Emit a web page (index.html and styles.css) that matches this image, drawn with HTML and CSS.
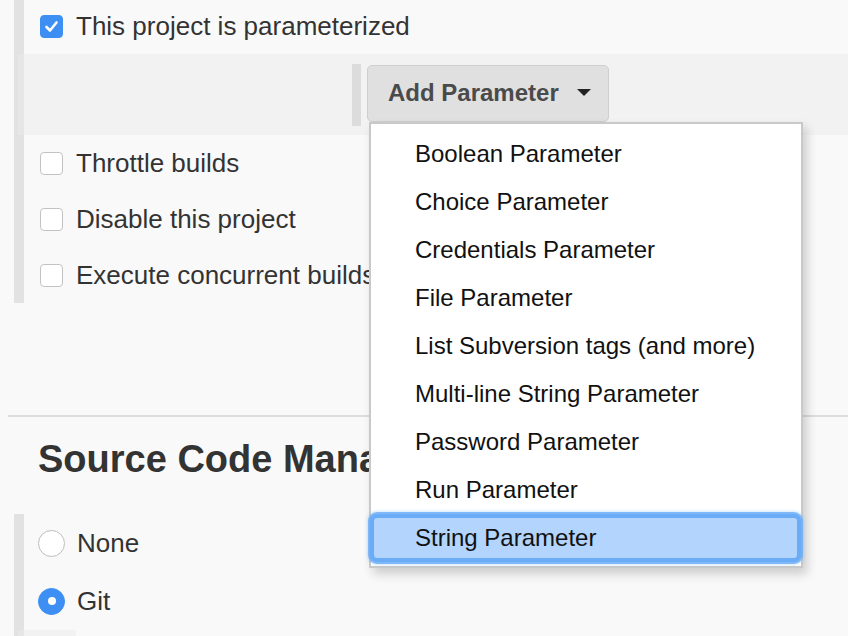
FILE: index.html
```html
<!DOCTYPE html>
<html>
<head>
<meta charset="utf-8">
<link rel="stylesheet" href="styles.css">
</head>
<body>
<div class="page">
  <div class="sec1">
    <div class="row row-first">
      <span class="cb checked">
        <svg viewBox="0 0 23 23" width="23" height="23"><path d="M6.5 12 L10 15.5 L16.5 7.5" fill="none" stroke="#fff" stroke-width="2.6" stroke-linecap="round" stroke-linejoin="round"/></svg>
      </span>
      <span class="label">This project is parameterized</span>
    </div>
    <div class="band">
      <span class="band-bar"></span>
      <button class="add-btn">Add Parameter<span class="caret"></span></button>
    </div>
    <div class="row"><span class="cb"></span><span class="label">Throttle builds</span></div>
    <div class="row"><span class="cb"></span><span class="label">Disable this project</span></div>
    <div class="row"><span class="cb"></span><span class="label">Execute concurrent builds if necessary</span></div>
  </div>

  <div class="sec2">
    <h2 class="heading">Source Code Management</h2>
  </div>

  <div class="sec3">
    <div class="rrow"><span class="radio"></span><span class="label">None</span></div>
    <div class="rrow"><span class="radio on"></span><span class="label">Git</span></div>
    <div class="band2"></div>
  </div>

  <ul class="menu">
    <li class="item">Boolean Parameter</li>
    <li class="item">Choice Parameter</li>
    <li class="item">Credentials Parameter</li>
    <li class="item">File Parameter</li>
    <li class="item">List Subversion tags (and more)</li>
    <li class="item">Multi-line String Parameter</li>
    <li class="item">Password Parameter</li>
    <li class="item">Run Parameter</li>
    <li class="item selected">String Parameter</li>
  </ul>
</div>
</body>
</html>
```

FILE: styles.css
```css
html, body {
  margin: 0;
  padding: 0;
}
body {
  font-family: "Liberation Sans", Arial, Helvetica, sans-serif;
  background: #f9f9f9;
}
.page {
  position: relative;
  width: 848px;
  height: 636px;
  overflow: hidden;
  background: #f9f9f9;
  color: #333;
}
.sec1 {
  margin-left: 14px;
  border-left: 10px solid #e2e2e2;
}
.row {
  display: flex;
  align-items: center;
  height: 56px;
  padding-left: 16px;
  gap: 13px;
  white-space: nowrap;
}
.row-first {
  height: 52px;
  margin-bottom: 2px;
}
.label {
  font-size: 26px;
  color: #333;
}
.cb {
  box-sizing: border-box;
  width: 23px;
  height: 23px;
  flex: none;
  border: 1px solid #c3c3c3;
  border-radius: 4px;
  background: #fff;
  display: flex;
}
.cb.checked {
  background: #3d8ff3;
  border-color: #3d8ff3;
}
.cb.checked svg {
  margin: -1px;
}
.band {
  display: flex;
  align-items: center;
  height: 81px;
  margin-left: -6px;
  border-left: 6px solid #e6e6e6;
  background: #f2f2f2;
}
.band-bar {
  width: 9px;
  height: 62px;
  margin-left: 328px;
  margin-right: 6px;
  background: #dcdcdc;
  align-self: flex-start;
  margin-top: 10px;
}
.add-btn {
  box-sizing: border-box;
  width: 242px;
  height: 57px;
  align-self: flex-start;
  margin-top: 11px;
  border: 1px solid #cfcfcf;
  border-radius: 5px;
  background: #e0e0e0;
  font-family: "Liberation Sans", Arial, sans-serif;
  font-weight: bold;
  font-size: 24px;
  color: #4a4a4a;
  text-align: left;
  padding: 0 0 2px 20px;
  display: flex;
  align-items: center;
}
.caret {
  width: 0;
  height: 0;
  margin-left: 18px;
  border-left: 7.5px solid transparent;
  border-right: 7.5px solid transparent;
  border-top: 7px solid #222;
}
.sec2 {
  margin-left: 8px;
  margin-top: 112px;
  border-top: 2px solid #dddddd;
  padding-left: 30px;
}
.heading {
  margin: 0;
  padding-top: 18px;
  height: 79px;
  box-sizing: border-box;
  font-size: 38px;
  font-weight: bold;
  line-height: 48px;
  color: #333;
  white-space: nowrap;
}
.sec3 {
  margin-left: 14px;
  margin-top: 18px;
  border-left: 10px solid #e2e2e2;
}
.rrow {
  display: flex;
  align-items: center;
  height: 58px;
  padding-left: 14px;
  gap: 12px;
}
.radio {
  box-sizing: border-box;
  width: 27px;
  height: 27px;
  flex: none;
  border-radius: 50%;
  border: 1px solid #bdbdbd;
  background: #fff;
  display: flex;
  align-items: center;
  justify-content: center;
}
.radio.on {
  background: #3d8ff3;
  border-color: #3d8ff3;
}
.radio.on::after {
  content: "";
  width: 8px;
  height: 8px;
  border-radius: 50%;
  background: #fff;
}
.band2 {
  margin-left: -6px;
  width: 52px;
  height: 20px;
  border-left: 6px solid #e6e6e6;
  background: #f2f2f2;
}
.menu {
  position: absolute;
  left: 369px;
  top: 122px;
  box-sizing: border-box;
  width: 434px;
  height: 446px;
  margin: 0;
  padding: 6px 0 0 0;
  list-style: none;
  background: #fff;
  border: 2px solid #c9c9c9;
  box-shadow: 4px 6px 10px rgba(0, 0, 0, 0.18);
}
.item {
  box-sizing: border-box;
  height: 48px;
  display: flex;
  align-items: center;
  padding-left: 44px;
  font-size: 24px;
  color: #111;
  white-space: nowrap;
}
.item.selected {
  margin: 0 0 0 -1px;
  padding-left: 41px;
  background: #b3d4fc;
  border: 4px solid #6aacf6;
  border-radius: 7px;
  box-shadow: 0 0 0 2px rgba(106, 172, 246, 0.8), 0 0 3px 3px rgba(106, 172, 246, 0.3);
}
```
